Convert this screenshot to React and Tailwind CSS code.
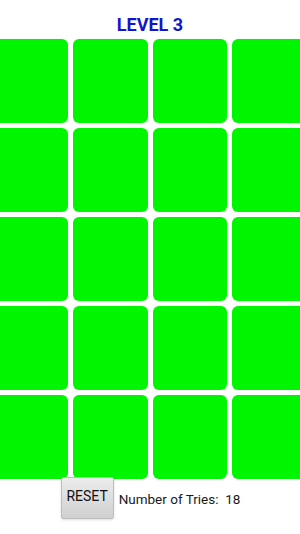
export default function App() {
  const tiles = Array.from({ length: 20 }, (_, i) => i);

  return (
    <div className="w-[300px] h-[534px] bg-white overflow-hidden flex flex-col items-center" style={{ fontFamily: 'Roboto, "Liberation Sans", sans-serif' }}>
      {/* Title */}
      <h1 className="mt-[14px] h-[22px] leading-[22px] text-[18px] font-bold text-[#1414cc]">LEVEL 3</h1>

      {/* Card grid */}
      <div className="mt-[3px] w-[314px] shrink-0 grid grid-cols-4 gap-x-[5px] gap-y-[5px]">
        {tiles.map(i => (
          <div key={i} className="h-[84px] rounded-[6px] bg-[#00f500]"></div>
        ))}
      </div>

      {/* Footer */}
      <div className="mt-[-2px] flex items-center gap-[5px] ml-[1px]">
        <button className="w-[53px] h-[42px] bg-gradient-to-b from-[#ececec] to-[#d0d0d0] border border-[#bdbdbd] rounded-[2px] shadow-sm text-[14px] text-[#111] pb-[4px]">
          RESET
        </button>
        <span className="text-[13.5px] text-[#1a1a1a] pt-[2px]">Number of Tries:&nbsp; 18</span>
      </div>
    </div>
  );
}
